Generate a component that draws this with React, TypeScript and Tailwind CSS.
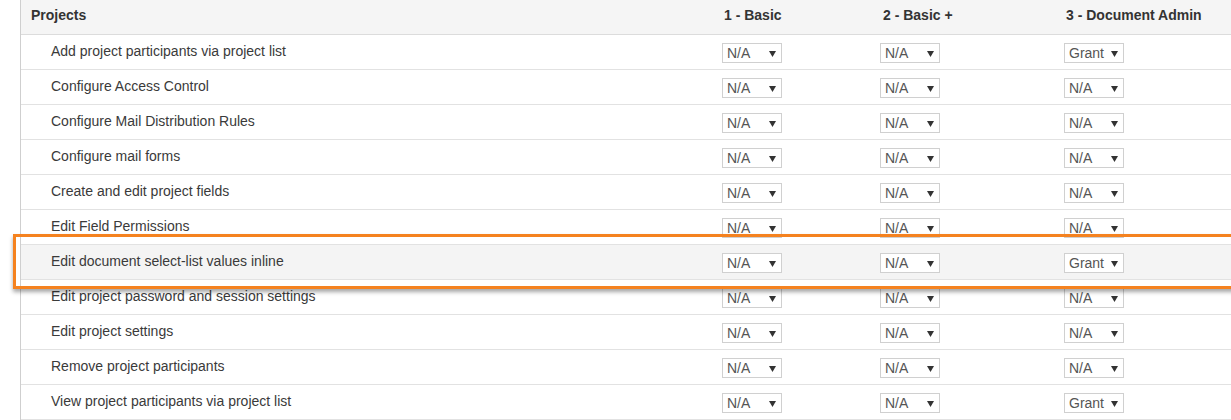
import React from "react";

type Row = { label: string; v: [string, string, string] };

const rows: Row[] = [
  { label: "Add project participants via project list", v: ["N/A", "N/A", "Grant"] },
  { label: "Configure Access Control", v: ["N/A", "N/A", "N/A"] },
  { label: "Configure Mail Distribution Rules", v: ["N/A", "N/A", "N/A"] },
  { label: "Configure mail forms", v: ["N/A", "N/A", "N/A"] },
  { label: "Create and edit project fields", v: ["N/A", "N/A", "N/A"] },
  { label: "Edit Field Permissions", v: ["N/A", "N/A", "N/A"] },
  { label: "Edit document select-list values inline", v: ["N/A", "N/A", "Grant"] },
  { label: "Edit project password and session settings", v: ["N/A", "N/A", "N/A"] },
  { label: "Edit project settings", v: ["N/A", "N/A", "N/A"] },
  { label: "Remove project participants", v: ["N/A", "N/A", "N/A"] },
  { label: "View project participants via project list", v: ["N/A", "N/A", "Grant"] },
];

function Sel({ value }: { value: string }) {
  return (
    <div className="relative h-[20px] w-[60px] border border-[#d0d0d0] bg-white text-[#555]">
      <span className="absolute left-[4px] top-[1px] text-[14px] leading-[17px]">{value}</span>
      <svg className="absolute left-[46px] top-[7px]" width="7" height="6" viewBox="0 0 7 6">
        <path d="M0 0 H7 L3.5 6 Z" fill="#333" />
      </svg>
    </div>
  );
}

export default function App() {
  return (
    <div
      className="relative h-[420px] w-[1231px] overflow-hidden bg-white text-[#3a3a3a]"
      style={{ fontFamily: '"Liberation Sans", Arial, sans-serif' }}
    >
      <div className="ml-[20px] border-l border-[#cfcfcf]">
        <div className="grid h-[35px] grid-cols-[694px_158px_184px_1fr] items-center border-b border-[#dcdcdc] bg-[#f5f5f5] pb-[3px] text-[14px] font-bold text-[#333]">
          <div className="pl-[10px]">Projects</div>
          <div className="pl-[9px]">1 - Basic</div>
          <div className="pl-[10px]">2 - Basic +</div>
          <div className="pl-[9px]">3 - Document Admin</div>
        </div>
        {rows.map((r, i) => (
          <div
            key={i}
            className={`grid h-[35px] grid-cols-[694px_158px_184px_1fr] items-center border-b border-[#e2e2e2] text-[14px] ${
              i === 6 ? "bg-[#f4f4f4]" : "bg-white"
            }`}
          >
            <div className="pb-[2px] pl-[30px]">{r.label}</div>
            <div className="pl-[7px] pt-[2px]">
              <Sel value={r.v[0]} />
            </div>
            <div className="pl-[7px] pt-[2px]">
              <Sel value={r.v[1]} />
            </div>
            <div className="pl-[7px] pt-[2px]">
              <Sel value={r.v[2]} />
            </div>
          </div>
        ))}
      </div>
      <div className="pointer-events-none absolute left-[13px] top-[234px] h-[55px] w-[1240px] border-[3px] border-[#f5821f] shadow-[0_3px_4px_rgba(0,0,0,0.35)]" />
    </div>
  );
}
